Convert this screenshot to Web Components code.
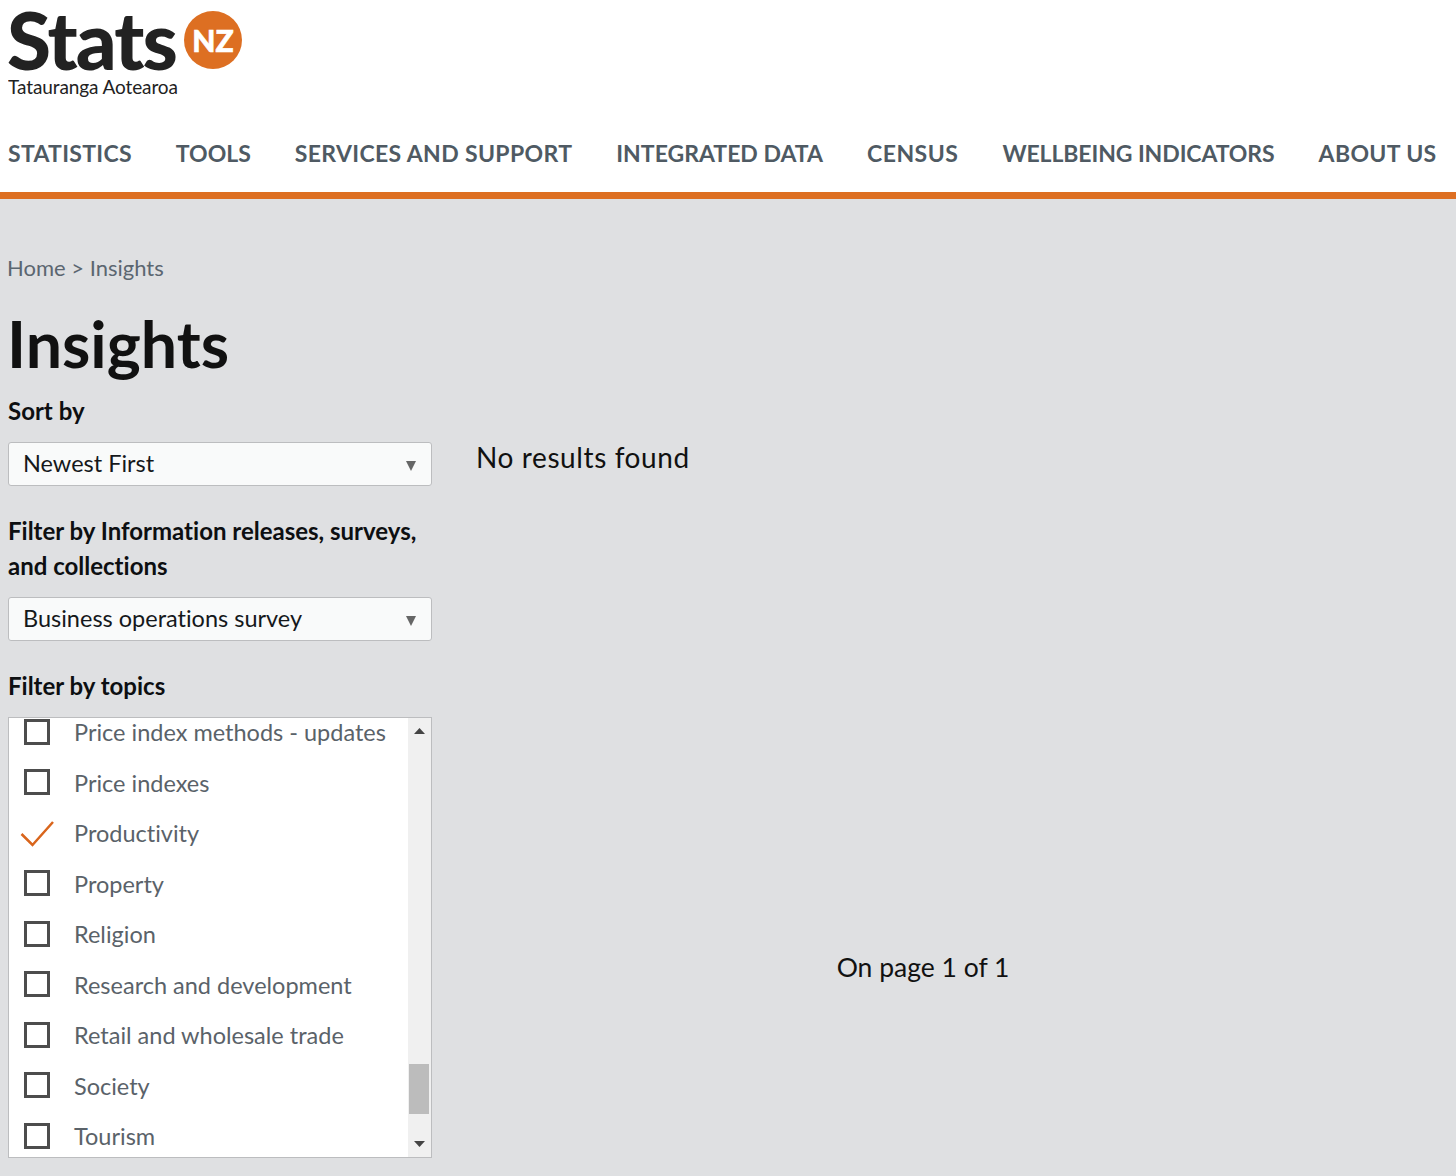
<!DOCTYPE html>
<html lang="en">
<head>
<meta charset="utf-8">
<title>Insights</title>
<style>
  html, body { margin: 0; padding: 0; }
  body { background: #dfe0e2; font-family: Lato, "Open Sans", sans-serif; font-variant-ligatures: none; height: 1176px; overflow: hidden; }
</style>
</head>
<body>
<site-header></site-header>
<insights-page>
  <filter-panel slot="side">
    <field-label>Sort by</field-label>
    <fake-select style="margin-top:14px">Newest First</fake-select>
    <field-label style="margin-top:27px">Filter by Information releases, surveys, and collections</field-label>
    <fake-select style="margin-top:14px">Business operations survey</fake-select>
    <field-label style="margin-top:27px">Filter by topics</field-label>
    <topic-list style="margin-top:14px">
      <topic-item>Price index methods - updates</topic-item>
      <topic-item>Price indexes</topic-item>
      <topic-item checked>Productivity</topic-item>
      <topic-item>Property</topic-item>
      <topic-item>Religion</topic-item>
      <topic-item>Research and development</topic-item>
      <topic-item>Retail and wholesale trade</topic-item>
      <topic-item>Society</topic-item>
      <topic-item>Tourism</topic-item>
    </topic-list>
  </filter-panel>
  <results-panel slot="main"></results-panel>
</insights-page>

<script>
class SiteHeader extends HTMLElement {
  constructor() {
    super();
    const shadow = this.attachShadow({ mode: 'open' });
    // letter spacing per link, the reference font is a bit wider than Lato
    const links = [
      ['STATISTICS', .3], ['TOOLS', 0], ['SERVICES AND SUPPORT', .35], ['INTEGRATED DATA', 0],
      ['CENSUS', .5], ['WELLBEING INDICATORS', -.1], ['ABOUT US', .35]
    ];
    shadow.innerHTML = `
      <style>
        :host { display: block; background: #fff; height: 192px; border-bottom: 7px solid #dd6f22; padding: 0 8px; font-family: Lato, sans-serif; font-variant-ligatures: none; }
        .logo { height: 108px; }
        svg { display: block; }
        text { font-family: Lato, sans-serif; }
        nav { display: flex; gap: 44px; height: 84px; padding-top: 30px; box-sizing: border-box; }
        a { font-size: 23px; line-height: 30px; font-weight: 700; color: #4f5a63; white-space: nowrap; }
      </style>
      <div class="logo">
        <svg width="240" height="108" viewBox="0 0 240 108">
          <text x="-1" y="70" font-size="80" font-weight="900" fill="#222" textLength="171" lengthAdjust="spacing">Stats</text>
          <text x="0" y="94" font-size="19" fill="#222" textLength="170" lengthAdjust="spacing">Tatauranga Aotearoa</text>
          <circle cx="205" cy="40" r="29" fill="#dd6f22"/>
          <text x="205" y="52" font-size="30" font-weight="900" fill="#fff" stroke="#fff" stroke-width=".6" text-anchor="middle">NZ</text>
        </svg>
      </div>
      <nav>${links.map(l => `<a style="letter-spacing:${l[1]}px">${l[0]}</a>`).join('')}</nav>
    `;
  }
}

class InsightsPage extends HTMLElement {
  constructor() {
    super();
    const shadow = this.attachShadow({ mode: 'open' });
    shadow.innerHTML = `
      <style>
        :host { display: block; padding: 0 8px; font-family: Lato, sans-serif; font-variant-ligatures: none; }
        .crumb { font-size: 22px; line-height: 28px; color: #5b6670; padding-top: 55px; margin-left: -1px; }
        h1 { margin: 25px 0 0 -1px; font-size: 64.5px; line-height: 72px; font-weight: 700; color: #111; }
        .cols { display: flex; gap: 44px; margin-top: 14px; }
        .side { width: 424px; flex: none; }
        .main { width: 894px; }
      </style>
      <div class="crumb">Home &gt; Insights</div>
      <h1>Insights</h1>
      <div class="cols">
        <div class="side"><slot name="side"></slot></div>
        <div class="main"><slot name="main"></slot></div>
      </div>
    `;
  }
}

class FilterPanel extends HTMLElement {
  constructor() {
    super();
    this.attachShadow({ mode: 'open' }).innerHTML = `
      <style>:host { display: block; }</style>
      <slot></slot>
    `;
  }
}

class FieldLabel extends HTMLElement {
  constructor() {
    super();
    this.attachShadow({ mode: 'open' }).innerHTML = `
      <style>:host { display: block; font-size: 24px; line-height: 35px; font-weight: 700; color: #0d0f11; }</style>
      <slot></slot>
    `;
  }
}

class FakeSelect extends HTMLElement {
  constructor() {
    super();
    this.attachShadow({ mode: 'open' }).innerHTML = `
      <style>
        :host { display: flex; align-items: center; justify-content: space-between; height: 44px; box-sizing: border-box; background: #f9fafa; border: 1px solid #bcbdbf; border-radius: 3px; padding: 0 15px 3px 14px; font-size: 23.5px; color: #15181b; }
        svg { display: block; margin-top: 6px; }
      </style>
      <slot></slot>
      <svg width="10" height="10" viewBox="0 0 10 10"><path d="M0 0H10L5 10Z" fill="#666"/></svg>
    `;
  }
}

class TopicList extends HTMLElement {
  constructor() {
    super();
    this.attachShadow({ mode: 'open' }).innerHTML = `
      <style>
        :host { display: flex; height: 441px; box-sizing: border-box; background: #fff; border: 1px solid #bcbdbf; overflow: hidden; }
        .rows { flex: 1; margin-top: -10px; }
        .bar { width: 23px; flex: none; box-sizing: border-box; padding-right: 1px; background: #f0f0f0; display: flex; flex-direction: column; align-items: center; }
        .track { flex: 1; width: 100%; display: flex; flex-direction: column; justify-content: flex-end; align-items: center; padding-bottom: 27px; box-sizing: border-box; }
        .thumb { width: 20px; height: 50px; background: #bcbcbc; }
        svg { display: block; flex: none; }
      </style>
      <div class="rows"><slot></slot></div>
      <div class="bar">
        <svg style="margin-top:10px" width="11" height="6" viewBox="0 0 11 6"><path d="M5.5 0L11 6H0Z" fill="#444"/></svg>
        <div class="track"><div class="thumb"></div></div>
        <svg style="margin-bottom:10px" width="11" height="6" viewBox="0 0 11 6"><path d="M0 0H11L5.5 6Z" fill="#444"/></svg>
      </div>
    `;
  }
}

class TopicItem extends HTMLElement {
  constructor() {
    super();
    const checked = this.hasAttribute('checked');
    const mark = checked
      ? `<svg width="34" height="26" viewBox="0 0 34 26"><path d="M1.5 13L12.5 24L33 1" fill="none" stroke="#d9651c" stroke-width="2.5"/></svg>`
      : `<span class="box"></span>`;
    this.attachShadow({ mode: 'open' }).innerHTML = `
      <style>
        :host { display: flex; align-items: center; height: 50.5px; font-size: 23.5px; color: #5a6269; }
        .mark { width: 65px; flex: none; display: flex; padding-left: 11px; box-sizing: border-box; margin-top: -3px; }
        .check { margin-top: 0; }
        .box { display: block; width: 26px; height: 26px; box-sizing: border-box; border: 3px solid #4d4d4d; margin-left: 4px; }
        slot { display: block; margin-top: -2px; }
      </style>
      <div class="mark ${checked ? 'check' : ''}">${mark}</div>
      <slot></slot>
    `;
  }
}

class ResultsPanel extends HTMLElement {
  constructor() {
    super();
    this.attachShadow({ mode: 'open' }).innerHTML = `
      <style>
        :host { display: block; font-family: Lato, sans-serif; font-variant-ligatures: none; color: #111; }
        .none { padding-top: 46px; font-size: 28px; line-height: 36px; letter-spacing: .6px; }
        .pages { margin-top: 474px; font-size: 26.5px; line-height: 36px; text-align: center; }
      </style>
      <div class="none">No results found</div>
      <div class="pages">On page 1 of 1</div>
    `;
  }
}

customElements.define('site-header', SiteHeader);
customElements.define('insights-page', InsightsPage);
customElements.define('filter-panel', FilterPanel);
customElements.define('field-label', FieldLabel);
customElements.define('fake-select', FakeSelect);
customElements.define('topic-list', TopicList);
customElements.define('topic-item', TopicItem);
customElements.define('results-panel', ResultsPanel);
</script>
</body>
</html>
